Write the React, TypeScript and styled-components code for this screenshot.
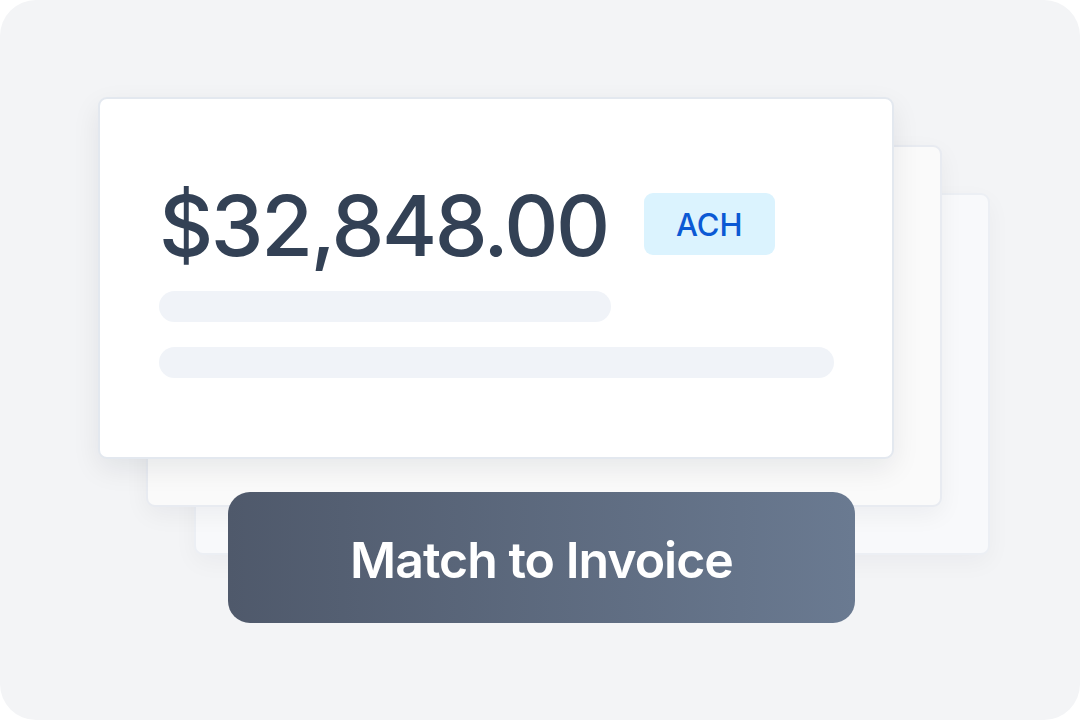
import React from "react";
import styled, { createGlobalStyle } from "styled-components";

const Global = createGlobalStyle`
  html, body { margin: 0; padding: 0; background: #ffffff; }
  body { font-family: Inter, "Noto Sans", sans-serif; }
`;

const Canvas = styled.div`
  position: relative;
  width: 1080px;
  height: 720px;
  background: #f3f4f6;
  border-radius: 36px;
  overflow: hidden;
`;

const Card = styled.div<{ $left: number; $top: number; $tone: string; $z: number; $shadow: string; $edge: string }>`
  position: absolute;
  left: ${(p) => p.$left}px;
  top: ${(p) => p.$top}px;
  width: 796px;
  height: 362px;
  box-sizing: border-box;
  background: ${(p) => p.$tone};
  border: 2px solid ${(p) => p.$edge};
  border-radius: 9px;
  box-shadow: ${(p) => p.$shadow};
  z-index: ${(p) => p.$z};
  display: flex;
  flex-direction: column;
  padding: 96px 58px 0 59px;
`;

const AmountRow = styled.div`
  display: flex;
  align-items: center;
  gap: 36px;
  height: 62px;
`;

const Amount = styled.div`
  font-family: Inter, sans-serif;
  font-size: 84px;
  font-weight: 500;
  color: #334155;
  letter-spacing: -2.4px;
  line-height: 62px;
  white-space: nowrap;
`;

const Badge = styled.div`
  width: 131px;
  height: 62px;
  margin-top: -4px;
  border-radius: 9px;
  background: #dbf3fe;
  color: #0b59d4;
  font-family: Inter, sans-serif;
  font-size: 31px;
  font-weight: 500;
  display: flex;
  align-items: center;
  justify-content: center;
`;

const Lines = styled.div`
  display: flex;
  flex-direction: column;
  gap: 25px;
  margin-top: 34px;
`;

const Skeleton = styled.div<{ $w: number }>`
  width: ${(p) => p.$w}px;
  height: 31px;
  border-radius: 16px;
  background: #f0f3f8;
`;

const ActionButton = styled.button`
  position: absolute;
  left: 228px;
  top: 492px;
  width: 627px;
  height: 131px;
  z-index: 5;
  border: none;
  border-radius: 22px;
  background: linear-gradient(90deg, #4f596b 0%, #6a7a91 100%);
  color: #ffffff;
  font-family: Inter, sans-serif;
  font-size: 50px;
  font-weight: 600;
  letter-spacing: -1px;
  display: flex;
  align-items: center;
  justify-content: center;
  padding: 4px 0 0;
`;

export default function App() {
  return (
    <>
      <Global />
      <Canvas>
        <Card
          $left={194}
          $top={193}
          $tone="#f8f9fb"
          $z={1}
          $edge="#eceff4"
          $shadow="0 8px 24px rgba(15,23,42,0.04)"
        />
        <Card
          $left={146}
          $top={145}
          $tone="#fafafa"
          $z={2}
          $edge="#e8ebf1"
          $shadow="0 8px 24px rgba(15,23,42,0.05)"
        />
        <Card
          $left={98}
          $top={97}
          $tone="#ffffff"
          $z={3}
          $edge="#e3e8ef"
          $shadow="0 10px 28px rgba(15,23,42,0.08)"
        >
          <AmountRow>
            <Amount>$32,848.00</Amount>
            <Badge>ACH</Badge>
          </AmountRow>
          <Lines>
            <Skeleton $w={452} />
            <Skeleton $w={675} />
          </Lines>
        </Card>
        <ActionButton>Match to Invoice</ActionButton>
      </Canvas>
    </>
  );
}
